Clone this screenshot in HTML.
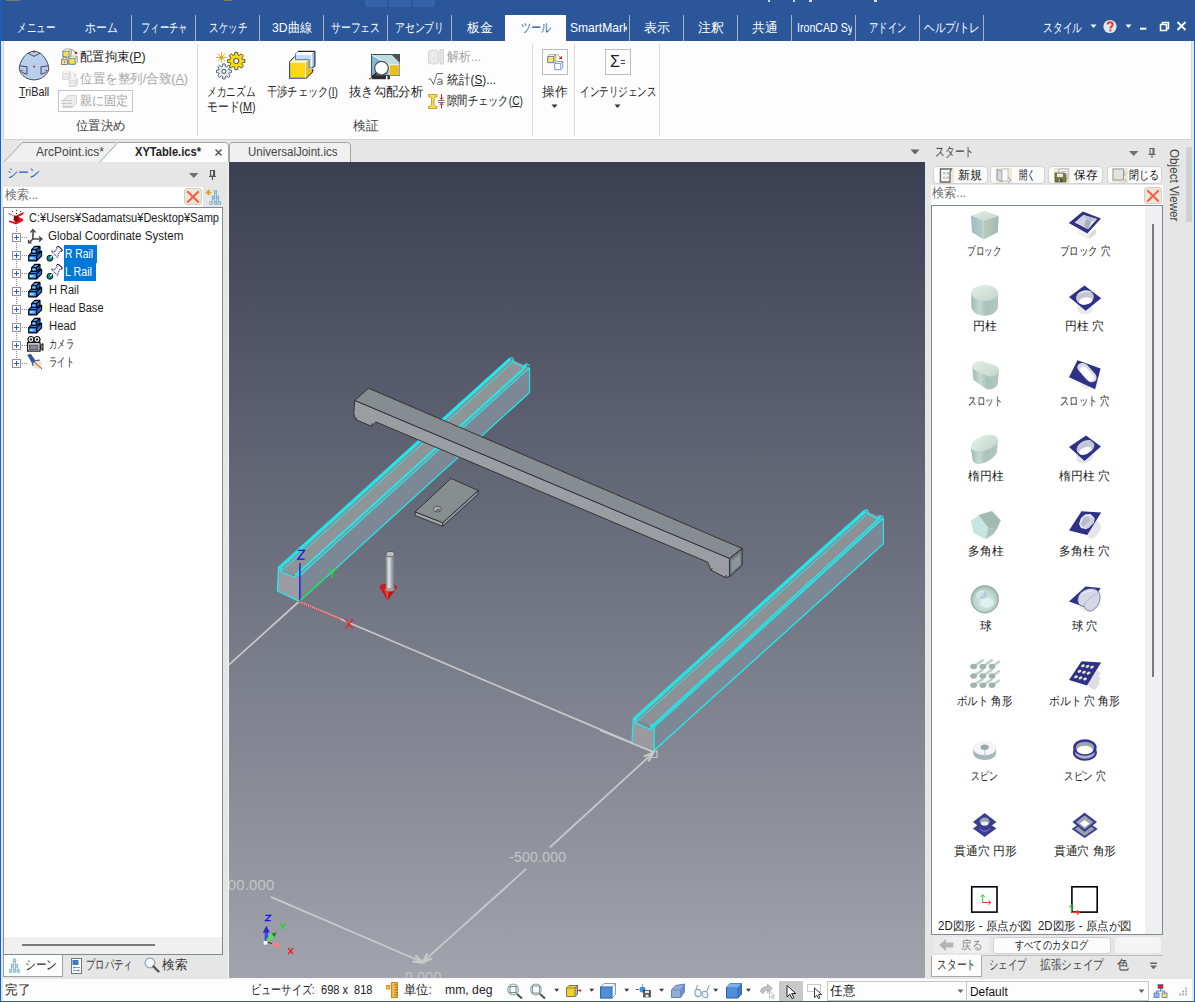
<!DOCTYPE html>
<html lang="ja">
<head>
<meta charset="utf-8">
<title>IronCAD</title>
<style>
*{box-sizing:border-box;margin:0;padding:0}
html,body{width:1195px;height:1002px;overflow:hidden}
body{position:relative;background:#e6e6e6;font-family:"Liberation Sans",sans-serif;font-size:12px;color:#1e1e1e}
.abs{position:absolute}
.t{position:absolute;white-space:nowrap;line-height:16px;height:16px;font-size:12px;transform-origin:0 0}
.clip{position:absolute;overflow:hidden}
.c{text-align:center}
svg{position:absolute;overflow:visible}
/* top bar */
#top{left:0;top:0;width:1195px;height:41px;background:#2b579a}
.m{top:19px;height:17px;color:#fff;font-size:13px;line-height:17px}
.msep{position:absolute;top:15px;width:1px;height:26px;background:#a3b0c6}
#ribbon{left:3px;top:41px;width:1189px;border-left:1px solid #d6d6d6;height:98.600px;background:#fdfdfd;border-bottom:1px solid #d2d2d2;border-right:1px solid #d6d6d6}
.rsep{position:absolute;top:44px;width:1px;height:92px;background:#d8d8d8}
.r{font-size:13px;color:#262626}
.dis{color:#a6a6a6}
.g{top:118px;font-size:13px;color:#444}
u{text-decoration:underline;text-underline-offset:1px}
/* edges */
#edgeL{left:0;top:0;width:1px;height:1002px;background:#0f63d2}
#edgeR{left:1194px;top:41px;width:1px;height:961px;background:#0f63d2}
#edgeB{left:0;top:1001px;width:1195px;height:1px;background:#0f63d2}
/* viewport */
#view{left:229px;top:162px;width:696px;height:816px;background:linear-gradient(#3b3f52,#a1a4ad);overflow:hidden}
/* status */
#status{left:3px;top:979px;width:1189px;height:22px;background:#fdfdfd}
/* left panel */
#lp-search{left:3px;top:187px;width:200px;height:20px;background:#fff}
#tree{left:3px;top:207px;width:220px;height:748px;background:#fff;border:1px solid #828790;overflow:hidden}
.trow{position:absolute;left:0;height:18px;line-height:18px;font-size:12px;white-space:nowrap;color:#1e1e1e}
.sel{position:absolute;background:#0078d7;color:#fff;height:18px;line-height:18px;font-size:12px;white-space:nowrap}
.pm{position:absolute;width:9px;height:9px;border:1px solid #919191;background:#fff}
.pm:before{content:"";position:absolute;left:1px;top:3px;width:5px;height:1px;background:#2b5fc0}
.pm:after{content:"";position:absolute;left:3px;top:1px;width:1px;height:5px;background:#2b5fc0}
/* right panel */
.cbtn{position:absolute;top:166.300px;height:17.400px;background:#fbfbfb;border:1px solid #d2d2d2;border-radius:4px;font-size:12px;line-height:15px;white-space:nowrap}
#cat{left:931px;top:205px;width:232px;height:730px;background:#fff;border:1px solid #828790;overflow:hidden}
.cl{position:absolute;width:116px;text-align:center;font-size:12px;line-height:16px;height:16px;white-space:nowrap;color:#1e1e1e}
</style>
</head>
<body>
<div id="top" class="abs"></div>
<!-- faint title-bar remnants -->
<div class="abs" style="left:365px;top:0;width:22px;height:7px;background:#3563aa"></div>
<div class="abs" style="left:389px;top:0;width:22px;height:7px;background:#3563aa"></div>
<div class="abs" style="left:413px;top:0;width:22px;height:7px;background:#3563aa"></div>
<div class="abs" style="left:6px;top:0;width:14px;height:1px;background:#7a7a6a"></div>
<div class="abs" style="left:224px;top:0;width:8px;height:1px;background:#8a7a4a"></div>
<div class="abs" style="left:768px;top:0;width:2px;height:1.500px;background:#c9d4e8"></div>
<div class="abs" style="left:792.500px;top:0;width:2px;height:1.500px;background:#c9d4e8"></div>
<div class="abs" style="left:808.500px;top:0;width:3px;height:1.500px;background:#d9e1f0"></div>
<div class="abs" style="left:874px;top:0;width:3px;height:1.500px;background:#d9e1f0"></div>
<!-- active tab -->
<div class="abs" style="left:505px;top:15px;width:61px;height:27px;background:#fdfdfd"></div>
<div class="msep" style="left:131px"></div>
<div class="msep" style="left:195px"></div>
<div class="msep" style="left:259px"></div>
<div class="msep" style="left:323px"></div>
<div class="msep" style="left:387px"></div>
<div class="msep" style="left:451px"></div>
<div class="msep" style="left:629px"></div>
<div class="msep" style="left:683px"></div>
<div class="msep" style="left:737px"></div>
<div class="msep" style="left:791px"></div>
<div class="msep" style="left:855px"></div>
<div class="msep" style="left:919px"></div>
<div class="msep" style="left:983px"></div>
<div class="t m" style="left:17px;transform:scaleX(0.731)">メニュー</div>
<div class="t m" style="left:85px;transform:scaleX(0.833)">ホーム</div>
<div class="t m" style="left:140.6px;transform:scaleX(0.714)">フィーチャ</div>
<div class="t m" style="left:209px;transform:scaleX(0.731)">スケッチ</div>
<div class="t m" style="left:272.3px;transform:scaleX(0.938)">3D曲線</div>
<div class="t m" style="left:331px;transform:scaleX(0.754)">サーフェス</div>
<div class="t m" style="left:395px;transform:scaleX(0.754)">アセンブリ</div>
<div class="t m" style="left:466.5px;transform:scaleX(0.981)">板金</div>
<div class="t m" style="left:644px;transform:scaleX(1.000)">表示</div>
<div class="t m" style="left:698px;transform:scaleX(1.000)">注釈</div>
<div class="t m" style="left:752.4px;transform:scaleX(0.985)">共通</div>
<div class="t m" style="left:868.6px;transform:scaleX(0.719)">アドイン</div>
<div class="t m" style="left:1043px;transform:scaleX(0.750)">スタイル</div>
<div class="t m" style="left:520.5px;transform:scaleX(0.782);color:#2b579a">ツール</div>
<div class="clip" style="left:570px;top:15px;width:57px;height:26px"><div class="t m" style="left:0;top:4px;transform:scaleX(0.928)">SmartMark</div></div>
<div class="clip" style="left:796px;top:15px;width:56px;height:26px"><div class="t m" style="left:0.6px;top:4px;transform:scaleX(0.818)">IronCAD Sys</div></div>
<div class="clip" style="left:923px;top:15px;width:58px;height:26px"><div class="t m" style="left:1px;top:4px;transform:scaleX(0.816)">ヘルプ/トレ</div></div>
<svg style="left:1088px;top:14px" width="107" height="26" viewBox="0 0 107 26">
  <path d="M2.5 10.5h6l-3 3.5z" fill="#fff"/>
  <circle cx="22" cy="12.5" r="6.6" fill="#e4e8f2"/>
  <path d="M19.6 10.6c0-3.2 5-3.2 5 0c0 2-2.2 2-2.2 3.8" fill="none" stroke="#e8392c" stroke-width="2"/>
  <rect x="21.4" y="15.4" width="2" height="2" fill="#e8392c"/>
  <path d="M37.5 10.5h6l-3 3.5z" fill="#fff"/>
  <rect x="52" y="13.700" width="6.300" height="2" fill="#fff"/>
  <path d="M72.5 10.5h6v6h-6z M74.5 10.5v-2h6v6h-2" fill="none" stroke="#fff" stroke-width="1.5"/>
  <path d="M89.5 8l8 8M97.5 8l-8 8" stroke="#fff" stroke-width="1.8" fill="none"/>
</svg>
<div id="ribbon" class="abs"></div>
<div class="rsep" style="left:197px"></div>
<div class="rsep" style="left:532px"></div>
<div class="rsep" style="left:574px"></div>
<div class="rsep" style="left:659px"></div>
<!-- TriBall -->
<svg style="left:18px;top:49px" width="34" height="34" viewBox="0 0 34 34">
  <path d="M16 2.400C23.500 2.400 28.800 10 30.600 17.500C31.800 24 24.500 30.900 16 30.900C7.500 30.900.200 24 1.400 17.500C3.200 10 8.500 2.400 16 2.400Z" fill="#b9cfec" stroke="#3f4a5c" stroke-width="1"/>
  <path d="M10 4.2l6 3.2 6-3.2" fill="none" stroke="#3f4a5c" stroke-width="1"/>
  <path d="M1.600 16.800l7.400 1v7.500l-4.800-1.800" fill="#b3c9e8" stroke="#3f4a5c" stroke-width="1"/>
  <path d="M30.400 16.800l-7.400 1v7.500l4.800-1.800" fill="#b3c9e8" stroke="#3f4a5c" stroke-width="1"/>
  <circle cx="16" cy="2.400" r="1" fill="#b01020"/><circle cx="16.200" cy="17.600" r="0.900" fill="#b01020"/>
  <ellipse cx="3.600" cy="21.800" rx="1.100" ry="0.800" fill="#b01020"/><ellipse cx="28.400" cy="21.800" rx="1.100" ry="0.800" fill="#b01020"/>
</svg>
<div class="t r" style="left:19.2px;top:84px;font-size:12.5px;transform:scaleX(0.864)"><u>T</u>riBall</div>
<!-- 配置拘束 -->
<svg style="left:61px;top:49px" width="17" height="17" viewBox="0 0 17 17">
  <path d="M1.9 2.4l2-2.200h6.200v5.800l-2 2.200h-6.200z" fill="#fbe04a" stroke="#4a7ac8" stroke-width="1" stroke-linejoin="round"/><path d="M1.9 2.4l2-2.200h6.200l-2 2.200z" fill="#fbf2a4"/><path d="M8.1 2.4l2-2.200v5.800l-2 2.200z" fill="#e8d88a"/><path d="M1.9 2.4h6.200v5.800M8.1 2.4l2-2.200" fill="none" stroke="#4a7ac8" stroke-width="0.700"/>
  <path d="M7.8 9.5l2-2.200h6.200v5.800l-2 2.200h-6.200z" fill="#fbe04a" stroke="#4a7ac8" stroke-width="1" stroke-linejoin="round"/><path d="M7.8 9.5l2-2.200h6.200l-2 2.200z" fill="#fbf2a4"/><path d="M14 9.5l2-2.200v5.800l-2 2.200z" fill="#e8d88a"/><path d="M7.8 9.5h6.200v5.800M14 9.5l2-2.200" fill="none" stroke="#4a7ac8" stroke-width="0.700"/>
  <path d="M1.800 10.800v-1.300a1.700 1.700 0 013.400 0v1.300" fill="none" stroke="#8f8f8f" stroke-width="1.100"/>
  <rect x="0.500" y="10.700" width="6" height="4.800" fill="#f0dfb0" stroke="#8a7a50" stroke-width="0.900"/><rect x="3" y="12.300" width="1" height="1.800" fill="#8a7a50"/>
  <path d="M11.200 0.500l3.400 3.200" stroke="#e8384a" stroke-width="0.900" fill="none"/><circle cx="15" cy="4" r="1.200" fill="#e00018"/>
</svg>
<div class="t r" style="left:80.2px;top:48.5px;transform:scaleX(0.946)">配置拘束(<u>P</u>)</div>
<!-- 位置を整列 -->
<svg style="left:61px;top:71px" width="17" height="17" viewBox="0 0 17 17">
  <path d="M1.5 2.5l2-2.200h6.200v5.800l-2 2.200h-6.200z" fill="#ececec" stroke="#d4d4d4" stroke-width="1" stroke-linejoin="round"/><path d="M1.5 2.5l2-2.200h6.200l-2 2.200z" fill="#f4f4f4"/><path d="M7.7 2.5l2-2.200v5.800l-2 2.200z" fill="#e2e2e2"/><path d="M1.5 2.5h6.200v5.800M7.7 2.5l2-2.200" fill="none" stroke="#d4d4d4" stroke-width="0.700"/>
  <path d="M8.3 9.5l2-2.200h6.200v5.800l-2 2.200h-6.200z" fill="#ececec" stroke="#d4d4d4" stroke-width="1" stroke-linejoin="round"/><path d="M8.3 9.5l2-2.200h6.200l-2 2.200z" fill="#f4f4f4"/><path d="M14.5 9.5l2-2.200v5.800l-2 2.200z" fill="#e2e2e2"/><path d="M8.3 9.5h6.200v5.800M14.5 9.5l2-2.200" fill="none" stroke="#d4d4d4" stroke-width="0.700"/>
  <path d="M11.200 1.500l3.400 3.200M14.800 2.300v2.600h-2.600" stroke="#cfcfcf" stroke-width="0.900" fill="none"/>
</svg>
<div class="t r dis" style="left:80.2px;top:70.5px;transform:scaleX(0.965)">位置を整列/合致(<u>A</u>)</div>
<!-- 親に固定 -->
<div class="abs" style="left:58px;top:90px;width:75px;height:22px;border:1px solid #c4c4c4"></div>
<svg style="left:61px;top:94px" width="17" height="15" viewBox="0 0 17 15">
  <path d="M2.5 5.5l4-4h9v7l-4 5h-9z" fill="#ececec" stroke="#d4d4d4"/>
  <path d="M0 6.500h11M0 9.500h11M1 12.500h10" stroke="#c9c9c9" fill="none"/>
</svg>
<div class="t r dis" style="left:79.6px;top:92.5px;transform:scaleX(0.935)">親に固定</div>
<div class="t g" style="left:76.4px;transform:scaleX(0.952)">位置決め</div>
<!-- メカニズム -->
<svg style="left:214px;top:50px" width="34" height="30" viewBox="0 0 34 30">
  <g stroke="#d9a520" stroke-width="0.900" fill="none"><path d="M7.400 1.900v11M1.900 7.400h11M3.500 3.500l7.800 7.800M11.300 3.500l-7.800 7.800"/></g><circle cx="7.400" cy="7.400" r="1.900" fill="#d9a520"/>
  <path d="M20.47 5.05L20.87 2.29L23.67 2.29L24.07 5.05L25.19 5.51L27.42 3.85L29.40 5.83L27.74 8.06L28.20 9.18L30.96 9.58L30.96 12.38L28.20 12.78L27.74 13.90L29.40 16.13L27.42 18.11L25.19 16.45L24.07 16.91L23.67 19.67L20.87 19.67L20.47 16.91L19.35 16.45L17.12 18.11L15.14 16.13L16.80 13.90L16.34 12.78L13.58 12.38L13.58 9.58L16.34 9.18L16.80 8.06L15.14 5.83L17.12 3.85L19.35 5.51Z" fill="#fadb14" stroke="#4a4a3a" stroke-width="0.900" stroke-linejoin="round"/>
  <circle cx="22.270" cy="10.980" r="2.600" fill="#fff" stroke="#3c4458" stroke-width="1"/>
  <path d="M8.35 16.45L8.75 13.90L11.15 13.90L11.55 16.45L12.32 16.77L14.41 15.24L16.11 16.94L14.58 19.03L14.90 19.80L17.45 20.20L17.45 22.60L14.90 23.00L14.58 23.77L16.11 25.86L14.41 27.56L12.32 26.03L11.55 26.35L11.15 28.90L8.75 28.90L8.35 26.35L7.58 26.03L5.49 27.56L3.79 25.86L5.32 23.77L5.00 23.00L2.45 22.60L2.45 20.20L5.00 19.80L5.32 19.03L3.79 16.94L5.49 15.24L7.58 16.77Z" fill="#e6e9f6" stroke="#4d5563" stroke-width="0.900" stroke-linejoin="round"/>
  <circle cx="9.950" cy="21.400" r="2" fill="#fff" stroke="#3c4458" stroke-width="1"/>
</svg>
<div class="t r" style="left:207px;top:83.5px;transform:scaleX(0.746)">メカニズム</div>
<div class="t r" style="left:207px;top:98.500px;transform:scaleX(0.829)">モード(<u>M</u>)</div>
<!-- 干渉チェック -->
<svg style="left:288px;top:50px" width="28" height="30" viewBox="0 0 28 30">
  <path d="M17.900 12.200l3.300-2.500v9l3.600.3v2.900l-6.900 6.500z" fill="#e8c020"/>
  <path d="M1.400 12.200l5.400-5.600 14.400 3.100-3.300 2.500z" fill="#fff6b4"/>
  <rect x="1.400" y="12.200" width="16.500" height="16.100" fill="#fdd718"/>
  <path d="M17.500 12.400v15.800" stroke="#fff" stroke-width="0.900"/>
  <path d="M1.400 12.200h16.500" stroke="#fff" stroke-width="0.800"/>
  <path d="M1.600 12.200v16.100h16.300" fill="none" stroke="#1a4f9c" stroke-width="1.100"/>
  <path d="M1.400 12L6.800 6.400M17.900 28.500l6.900-6.600v-3" fill="none" stroke="#111" stroke-width="1"/>
  <path d="M7.500 3.900l2.500-2.500h16.900l-2.500 2.500z" fill="#fff"/>
  <path d="M7.500 3.900h16.900v14h-3.200v-8.200h-13.700z" fill="#c5d9f5"/>
  <path d="M8 4.600h15.600v13" fill="none" stroke="#fff" stroke-width="1"/>
  <path d="M24.400 3.900l2.500-2.500v14.400l-2.500 2.100z" fill="#9dbcf0"/>
  <path d="M7.500 3.900v5.800h13.700v8.200h3.200" fill="none" stroke="#4a78c0" stroke-width="1"/>
  <path d="M7.500 3.900l2.500-2.500" fill="none" stroke="#4a78c0" stroke-width="0.900"/>
  <path d="M10 1.400h16.900v14.400l-2.500 2.100" fill="none" stroke="#1e2a40" stroke-width="1.100"/>
  <path d="M24.400 3.900l2.500-2.500" stroke="#5a6a88" stroke-width="0.700"/>
</svg>
<div class="t r" style="left:266.6px;top:83.500px;transform:scaleX(0.786)">干渉チェック(<u>I</u>)</div>
<!-- 抜き勾配分析 -->
<svg style="left:369px;top:53px" width="32" height="28" viewBox="0 0 32 28">
  <rect x="2.500" y="1.500" width="28" height="21" fill="#7fb7d6" stroke="#4a4a4a" stroke-width="1"/>
  <path d="M3 2h20l7.500 7.500v2h-11z" fill="#bfdde0"/>
  <path d="M3 2l16.500 9.500" stroke="#fff" stroke-width="1"/>
  <path d="M23 2h7.500v7.500z" fill="#505050"/>
  <rect x="19.700" y="11.300" width="10.800" height="11" fill="#fff"/><rect x="20.500" y="12.200" width="9.500" height="10" fill="#e8bf22"/>
  <circle cx="12.500" cy="15.200" r="6.800" fill="#fff" stroke="#4a4a4a" stroke-width="1.200"/>
  <path d="M7.500 20.500l-5 4.500" stroke="#333" stroke-width="2.400"/>
  <rect x="3" y="23" width="14" height="3.200" fill="#2c2c2c"/><rect x="18.500" y="22.500" width="2.400" height="3.800" fill="#2c2c2c"/>
  <rect x="0" y="25" width="2" height="1.300" fill="#e04010"/>
</svg>
<div class="t r" style="left:348.500px;top:83.500px;transform:scaleX(0.951)">抜き勾配分析</div>
<!-- 解析 -->
<svg style="left:428px;top:49px" width="17" height="16" viewBox="0 0 17 16">
  <path d="M0.500 3.500a5 2.500 0 0110 0v9a5 2.500 0 01-10 0z" fill="#e9e9e9" stroke="#d2d2d2"/>
  <rect x="12" y="0.500" width="3.500" height="14.500" fill="#e4e4e4" stroke="#d6d6d6"/>
</svg>
<div class="t r dis" style="left:447.200px;top:49px;transform:scaleX(0.923)">解析...</div>
<!-- 統計 -->
<svg style="left:428px;top:72px" width="17" height="14" viewBox="0 0 17 14">
  <path d="M0.500 7.500l2-1 3 6 3.500-11h6" fill="none" stroke="#6c6c6c" stroke-width="1"/>
  <path d="M9.500 7.800c1.500-1.300 4.500-1.200 4.500 1v3.700m0-2.700c-2.500 0-4.800.3-4.800 1.700 0 1.600 3.600 1.500 4.800-.3" fill="none" stroke="#555" stroke-width="1"/>
</svg>
<div class="t r" style="left:447.200px;top:71.500px;transform:scaleX(0.904)">統計(<u>S</u>)...</div>
<!-- 隙間チェック -->
<svg style="left:428px;top:94px" width="17" height="15" viewBox="0 0 17 15">
  <path d="M0.500 0.500h8.500v2.200h-1.800l-1.200 1.500v6.600l1.200 1.500h1.800v2.200h-8.500v-2.200h1.800l1.200-1.500v-6.600l-1.200-1.500h-1.800z" fill="#f9e04a" stroke="#b8981e" stroke-width="0.900"/>
  <path d="M13.500 0v5.500M13.500 14.500v-5.500M11.800 3.500l1.700 2 1.700-2M11.800 11l1.700-2 1.700 2" stroke="#e8202a" fill="none" stroke-width="1"/>
  <path d="M10 6.500h6.500M10 8.500h6.500" stroke="#777" stroke-width="1"/>
</svg>
<div class="t r" style="left:447.200px;top:93px;transform:scaleX(0.791)">隙間チェック(<u>C</u>)</div>
<div class="t g" style="left:352.500px;transform:scaleX(0.977)">検証</div>
<!-- 操作 -->
<div class="abs" style="left:542px;top:49px;width:26px;height:26px;border:1px solid #bcbcbc;background:#fdfdfd"></div>
<svg style="left:546px;top:53px" width="18" height="18" viewBox="0 0 18 18">
  <path d="M1.700 3.500l2-2h6v6.200l-2 2h-6z" fill="#f7e468" stroke="#5f7fb8" stroke-width="1" stroke-linejoin="round"/>
  <path d="M3.700 1.500l-2 2h6l2-2z" fill="#fdf3a8"/><path d="M7.700 3.500l2-2v6.200l-2 2z" fill="#f1dc50"/>
  <path d="M1.700 3.500h6v6.200M7.700 3.500l2-2" fill="none" stroke="#5f7fb8" stroke-width="0.900"/>
  <path d="M8.700 10.500l2-2h6v6.200l-2 2h-6z" fill="#fbfcff" stroke="#7f93d0" stroke-width="1" stroke-linejoin="round"/>
  <path d="M8.700 10.500h6v6.200M14.700 10.500l2-2" fill="none" stroke="#7f93d0" stroke-width="0.900"/>
  <path d="M11 1.200l3.500 3.400" fill="none" stroke="#e02828" stroke-width="1" stroke-dasharray="1 0.600"/>
  <path d="M15.900 5.900h-3.300l3.300-3.200z" fill="#e00010"/>
</svg>
<div class="t r" style="left:542.400px;top:83.500px;transform:scaleX(0.973)">操作</div>
<svg style="left:551px;top:104px" width="8" height="5" viewBox="0 0 8 5"><path d="M0.500 0.500h6l-3 3.500z" fill="#333"/></svg>
<!-- インテリジェンス -->
<div class="abs" style="left:605px;top:49px;width:26px;height:26px;border:1px solid #bcbcbc;background:#fdfdfd"></div>
<div class="t" style="left:610px;top:53px;font-size:17px;line-height:18px;height:18px;color:#222;transform:scaleX(0.951)">Σ</div>
<div class="abs" style="left:621px;top:60px;width:4px;height:1px;background:#444"></div>
<div class="abs" style="left:621px;top:63px;width:4px;height:1px;background:#444"></div>
<div class="t r" style="left:580px;top:83.500px;transform:scaleX(0.731)">インテリジェンス</div>
<svg style="left:614px;top:104px" width="8" height="5" viewBox="0 0 8 5"><path d="M0.500 0.500h6l-3 3.500z" fill="#333"/></svg>
<svg style="left:0;top:139px" width="930" height="24" viewBox="0 0 930 24">
  <path d="M3.500 23L22.500 3.500h96L100 23z" fill="#f0f0f0"/>
  <path d="M3.500 23.300L22.500 3.500h94" fill="none" stroke="#a3a3a3" stroke-width="1"/>
  <path d="M99.500 23L118 3.500h107q3.500 0 3.500 3.500v16z" fill="#fdfdfd"/>
  <path d="M99.500 23.300L118 3.500h107q3.500 0 3.500 3.500v16" fill="none" stroke="#a3a3a3" stroke-width="1"/>
  <path d="M229.500 23v-16.500q0-3 3-3h115q3 0 3 3v16.500z" fill="#f0f0f0"/>
  <path d="M229.500 23v-16.500q0-3 3-3h115q3 0 3 3v16.500" fill="none" stroke="#a3a3a3" stroke-width="1"/>
  <path d="M215.500 10.500l6 6M221.500 10.500l-6 6" stroke="#555" stroke-width="1.500" fill="none"/>
  <path d="M910.500 10.500h9l-4.500 5z" fill="#666"/>
</svg>
<div class="t" style="left:36px;top:143.500px;font-size:12.5px;color:#444;transform:scaleX(0.960)">ArcPoint.ics*</div>
<div class="t" style="left:135px;top:143.500px;font-size:12.5px;font-weight:bold;color:#222;transform:scaleX(0.891)">XYTable.ics*</div>
<div class="t" style="left:247.500px;top:143.500px;font-size:12.5px;color:#444;transform:scaleX(0.920)">UniversalJoint.ics</div>
<!-- left panel -->
<div class="t" style="left:7px;top:165px;font-size:13px;color:#1e63c8;transform:scaleX(0.833)">シーン</div>
<svg style="left:188px;top:169px" width="30" height="12" viewBox="0 0 30 12">
  <path d="M1 4h9.500l-4.750 5z" fill="#6f6f6f"/>
  <path d="M22.500 1.500h4v5.500h-4zM21 7.500h7M24.500 7.500v3.500" fill="none" stroke="#555" stroke-width="1.200"/>
  <rect x="25" y="2" width="1.500" height="5" fill="#555"/>
</svg>
<div id="lp-search" class="abs"></div>
<div class="t" style="left:5px;top:187px;font-size:12.5px;color:#6d6d6d;transform:scaleX(0.906)">検索...</div>
<div class="abs" style="left:184px;top:188px;width:18px;height:17px;background:#ece9d8;border:1px solid #cfcfca;border-radius:3px"></div>
<svg style="left:184px;top:188px" width="18" height="17" viewBox="0 0 18 17"><path d="M3.200 3.300l11.600 11.200M14.800 3.300L3.200 14.500" stroke="#fb5a44" stroke-width="2" fill="none"/></svg>
<svg style="left:205px;top:189px" width="16" height="16" viewBox="0 0 16 16">
  <g stroke="#d9a520" stroke-width="1"><path d="M3.500 0.500v6M0.500 3.500h6M1.400 1.400l4.200 4.200M5.600 1.400L1.400 5.600"/></g>
  <g fill="none" stroke="#7aa7d8" stroke-width="0.900"><path d="M10.500 3l-2 5.500-2.500 5.500M10.500 3l2 5.500 2 5.500M8.500 8.500l2 5.500M12.500 8.500l-2 5.500"/></g>
  <g fill="#d9ecb0" stroke="#6da0d8" stroke-width="0.800"><rect x="9.300" y="1.800" width="2.400" height="2.400"/><rect x="7.300" y="7.300" width="2.400" height="2.400"/><rect x="11.300" y="7.300" width="2.400" height="2.400"/><rect x="4.800" y="12.800" width="2.400" height="2.400"/><rect x="9.300" y="12.800" width="2.400" height="2.400"/><rect x="13" y="12.800" width="2.400" height="2.400"/></g>
</svg>
<div id="tree" class="abs"></div>
<div class="abs" style="left:16px;top:226px;width:1px;height:138px;background:repeating-linear-gradient(#fff 0 1px,#8a8a8a 1px 2px)"></div>
<div class="pm" style="left:12px;top:233px"></div><div class="abs" style="left:22px;top:237px;width:6px;height:1px;background:repeating-linear-gradient(90deg,#8a8a8a 0 1px,#fff 1px 2px)"></div>
<div class="pm" style="left:12px;top:251px"></div><div class="abs" style="left:22px;top:255px;width:6px;height:1px;background:repeating-linear-gradient(90deg,#8a8a8a 0 1px,#fff 1px 2px)"></div>
<div class="pm" style="left:12px;top:269px"></div><div class="abs" style="left:22px;top:273px;width:6px;height:1px;background:repeating-linear-gradient(90deg,#8a8a8a 0 1px,#fff 1px 2px)"></div>
<div class="pm" style="left:12px;top:287px"></div><div class="abs" style="left:22px;top:291px;width:6px;height:1px;background:repeating-linear-gradient(90deg,#8a8a8a 0 1px,#fff 1px 2px)"></div>
<div class="pm" style="left:12px;top:305px"></div><div class="abs" style="left:22px;top:309px;width:6px;height:1px;background:repeating-linear-gradient(90deg,#8a8a8a 0 1px,#fff 1px 2px)"></div>
<div class="pm" style="left:12px;top:323px"></div><div class="abs" style="left:22px;top:327px;width:6px;height:1px;background:repeating-linear-gradient(90deg,#8a8a8a 0 1px,#fff 1px 2px)"></div>
<div class="pm" style="left:12px;top:341px"></div><div class="abs" style="left:22px;top:345px;width:6px;height:1px;background:repeating-linear-gradient(90deg,#8a8a8a 0 1px,#fff 1px 2px)"></div>
<div class="pm" style="left:12px;top:359px"></div><div class="abs" style="left:22px;top:363px;width:6px;height:1px;background:repeating-linear-gradient(90deg,#8a8a8a 0 1px,#fff 1px 2px)"></div>
<svg style="left:8px;top:210px" width="17" height="16" viewBox="0 0 17 16">
  <path d="M0.500 3l5 2.500 3 0 7-3.500v2l-5 3 4.500 2v2l-7 3.500-7-2.500v-1.500l6.500 1.500 2-1-2-2-2-3-5-2z" fill="#e8101c"/>
  <path d="M6 6l4 0 1 4-3 2.500-2.500-2.500z" fill="#8a0a10"/>
  <g fill="#222"><rect x="4" y="1" width="1" height="1"/><rect x="8" y="0" width="1" height="1"/><rect x="12" y="1" width="1" height="1"/><rect x="8" y="3" width="1" height="1"/></g>
</svg>
<div class="clip" style="left:29px;top:209px;width:191px;height:18px"><div class="t" style="left:0.400px;top:1px;transform:scaleX(0.922)">C:¥Users¥Sadamatsu¥Desktop¥Samp</div></div>
<svg style="left:28px;top:229px" width="15" height="15" viewBox="0 0 15 15">
  <path d="M5 10V1.500M5 10h8.500M5 10l-4 3.500" stroke="#444" stroke-width="1.600" fill="none"/>
  <path d="M2.500 3.500l2.500-3 2.500 3M11 7.500l3 2.500-3 2.500M.5 10.800v3h3.200" stroke="#444" stroke-width="1.300" fill="none"/>
</svg>
<div class="t" style="left:48px;top:227.800px;transform:scaleX(0.967)">Global Coordinate System</div>
<svg style="left:28px;top:246px" width="15" height="16" viewBox="0 0 15 16">
  <g stroke="#000" stroke-width="1.100" stroke-linejoin="bevel">
  <path d="M0.700 9.700l4.300-4.500h8.600l-5 4.500z" fill="#1e86f0"/>
  <path d="M8.600 9.700l5-4.500v4.600l-5 5.100z" fill="#176fd8"/>
  <path d="M0.700 9.700h7.900v5.200h-7.900z" fill="#2a8cf4"/>
  <path d="M3.600 3.700l3.200-3.300h5.200l-3.400 3.300z" fill="#3f9cf8"/>
  <path d="M8.600 3.700l3.400-3.300v4.700l-3.400 2.300z" fill="#176fd8"/>
  <path d="M3.600 3.700h5v3.700h-5z" fill="#2a8cf4"/>
  </g>
  <path d="M4.500 4.600h2.500v1.600h-2.500z" fill="#8cc8ff"/><path d="M1.800 10.900h4.800v2.200h-4.800z" fill="#6fb8ff"/><path d="M2 11h3l-1 1.800h-2z" fill="#a8d8ff"/>
</svg>
<svg style="left:28px;top:264px" width="15" height="16" viewBox="0 0 15 16">
  <g stroke="#000" stroke-width="1.100" stroke-linejoin="bevel">
  <path d="M0.700 9.700l4.300-4.500h8.600l-5 4.500z" fill="#1e86f0"/>
  <path d="M8.600 9.700l5-4.500v4.600l-5 5.100z" fill="#176fd8"/>
  <path d="M0.700 9.700h7.900v5.200h-7.900z" fill="#2a8cf4"/>
  <path d="M3.600 3.700l3.200-3.300h5.200l-3.400 3.300z" fill="#3f9cf8"/>
  <path d="M8.600 3.700l3.400-3.300v4.700l-3.400 2.300z" fill="#176fd8"/>
  <path d="M3.600 3.700h5v3.700h-5z" fill="#2a8cf4"/>
  </g>
  <path d="M4.500 4.600h2.500v1.600h-2.500z" fill="#8cc8ff"/><path d="M1.800 10.900h4.800v2.200h-4.800z" fill="#6fb8ff"/><path d="M2 11h3l-1 1.800h-2z" fill="#a8d8ff"/>
</svg>
<svg style="left:28px;top:282px" width="15" height="16" viewBox="0 0 15 16">
  <g stroke="#000" stroke-width="1.100" stroke-linejoin="bevel">
  <path d="M0.700 9.700l4.300-4.500h8.600l-5 4.500z" fill="#1e86f0"/>
  <path d="M8.600 9.700l5-4.500v4.600l-5 5.100z" fill="#176fd8"/>
  <path d="M0.700 9.700h7.900v5.200h-7.900z" fill="#2a8cf4"/>
  <path d="M3.600 3.700l3.200-3.300h5.200l-3.400 3.300z" fill="#3f9cf8"/>
  <path d="M8.600 3.700l3.400-3.300v4.700l-3.400 2.300z" fill="#176fd8"/>
  <path d="M3.600 3.700h5v3.700h-5z" fill="#2a8cf4"/>
  </g>
  <path d="M4.500 4.600h2.500v1.600h-2.500z" fill="#8cc8ff"/><path d="M1.800 10.900h4.800v2.200h-4.800z" fill="#6fb8ff"/><path d="M2 11h3l-1 1.800h-2z" fill="#a8d8ff"/>
</svg>
<svg style="left:28px;top:300px" width="15" height="16" viewBox="0 0 15 16">
  <g stroke="#000" stroke-width="1.100" stroke-linejoin="bevel">
  <path d="M0.700 9.700l4.300-4.500h8.600l-5 4.500z" fill="#1e86f0"/>
  <path d="M8.600 9.700l5-4.500v4.600l-5 5.100z" fill="#176fd8"/>
  <path d="M0.700 9.700h7.900v5.200h-7.900z" fill="#2a8cf4"/>
  <path d="M3.600 3.700l3.200-3.300h5.200l-3.400 3.300z" fill="#3f9cf8"/>
  <path d="M8.600 3.700l3.400-3.300v4.700l-3.400 2.300z" fill="#176fd8"/>
  <path d="M3.600 3.700h5v3.700h-5z" fill="#2a8cf4"/>
  </g>
  <path d="M4.500 4.600h2.500v1.600h-2.500z" fill="#8cc8ff"/><path d="M1.800 10.900h4.800v2.200h-4.800z" fill="#6fb8ff"/><path d="M2 11h3l-1 1.800h-2z" fill="#a8d8ff"/>
</svg>
<svg style="left:28px;top:318px" width="15" height="16" viewBox="0 0 15 16">
  <g stroke="#000" stroke-width="1.100" stroke-linejoin="bevel">
  <path d="M0.700 9.700l4.300-4.500h8.600l-5 4.500z" fill="#1e86f0"/>
  <path d="M8.600 9.700l5-4.500v4.600l-5 5.100z" fill="#176fd8"/>
  <path d="M0.700 9.700h7.900v5.200h-7.900z" fill="#2a8cf4"/>
  <path d="M3.600 3.700l3.200-3.300h5.200l-3.400 3.300z" fill="#3f9cf8"/>
  <path d="M8.600 3.700l3.400-3.300v4.700l-3.400 2.300z" fill="#176fd8"/>
  <path d="M3.600 3.700h5v3.700h-5z" fill="#2a8cf4"/>
  </g>
  <path d="M4.500 4.600h2.500v1.600h-2.500z" fill="#8cc8ff"/><path d="M1.800 10.900h4.800v2.200h-4.800z" fill="#6fb8ff"/><path d="M2 11h3l-1 1.800h-2z" fill="#a8d8ff"/>
</svg>
<svg style="left:45.500px;top:246px" width="17" height="17" viewBox="0 0 17 17">
  <path d="M4.200 12l4-3.600" stroke="#d8d8d8" stroke-width="1.400"/>
  <circle cx="3.860" cy="12.300" r="2.900" fill="#0a9494" stroke="#111" stroke-width="1"/>
  <path d="M4.300 11.900l1.800-1.600" stroke="#f4f4f4" stroke-width="1.200"/>
  <path d="M5.300 5.100l3.900.2 1.900-3-.6-1q1-1.400 2.400-.6l3.100 2.700q.6 1.200-.6 1.900l-1.100-.4-1.800 2.900-.9 3.800z" fill="#f2f2f2" stroke="#1a1a9a" stroke-width="0.900" stroke-linejoin="round" stroke-dasharray="1.600 0.700"/>
  <path d="M10.500 1.300q1-1.400 2.400-.6l3.100 2.700q.6 1.200-.6 1.900" fill="none" stroke="#111" stroke-width="1"/>
</svg>
<svg style="left:45.500px;top:264px" width="17" height="17" viewBox="0 0 17 17">
  <path d="M4.200 12l4-3.600" stroke="#d8d8d8" stroke-width="1.400"/>
  <circle cx="3.860" cy="12.300" r="2.900" fill="#0a9494" stroke="#111" stroke-width="1"/>
  <path d="M4.300 11.900l1.800-1.600" stroke="#f4f4f4" stroke-width="1.200"/>
  <path d="M5.300 5.100l3.900.2 1.900-3-.6-1q1-1.400 2.400-.6l3.100 2.700q.6 1.200-.6 1.900l-1.100-.4-1.800 2.900-.9 3.800z" fill="#f2f2f2" stroke="#1a1a9a" stroke-width="0.900" stroke-linejoin="round" stroke-dasharray="1.600 0.700"/>
  <path d="M10.500 1.300q1-1.400 2.400-.6l3.100 2.700q.6 1.200-.6 1.900" fill="none" stroke="#111" stroke-width="1"/>
</svg>
<div class="abs" style="left:64px;top:245px;width:33px;height:18px;background:#0078d7"></div><div class="t" style="left:65px;top:245.800px;color:#fff;transform:scaleX(0.857)">R Rail</div>
<div class="abs" style="left:64px;top:263px;width:32px;height:18px;background:#0078d7"></div><div class="t" style="left:65px;top:263.800px;color:#fff;transform:scaleX(0.893)">L Rail</div>
<div class="t" style="left:48.600px;top:281.800px;transform:scaleX(0.918)">H Rail</div>
<div class="t" style="left:48.600px;top:299.800px;transform:scaleX(0.918)">Head Base</div>
<div class="t" style="left:48.600px;top:317.800px;transform:scaleX(0.941)">Head</div>
<div class="t" style="left:48.600px;top:335.800px;transform:scaleX(0.694)">カメラ</div>
<div class="t" style="left:48.600px;top:353.800px;transform:scaleX(0.694)">ライト</div>
<svg style="left:27px;top:336px" width="17" height="16" viewBox="0 0 17 16">
  <circle cx="4" cy="3.500" r="3" fill="#fff" stroke="#111" stroke-width="1.200"/><circle cx="10" cy="3.500" r="3" fill="#fff" stroke="#111" stroke-width="1.200"/>
  <circle cx="4" cy="3.500" r="1.200" fill="#333"/><circle cx="10" cy="3.500" r="1.200" fill="#333"/>
  <rect x="0.600" y="6.600" width="12.500" height="8.500" fill="#f2f2f2" stroke="#111" stroke-width="1.200"/>
  <rect x="2.500" y="9" width="8.500" height="4.500" fill="#8a86a8" stroke="#444" stroke-width="0.800"/>
  <path d="M13.500 9.500l2.500-2v7l-2.500-2z" fill="#999" stroke="#111" stroke-width="1"/>
</svg>
<svg style="left:27px;top:354px" width="17" height="16" viewBox="0 0 17 16">
  <circle cx="10.500" cy="10.500" r="4.300" fill="#e6e4c8"/>
  <path d="M0.800 1l3-.500 4.500 6.500-3 2z" fill="#2b5cae" stroke="#1c3f80" stroke-width="0.800"/>
  <path d="M5.500 9l.5 3M8.300 6.500l4.500-.300" stroke="#2b5cae" stroke-width="1.200"/>
  <path d="M6 7l9 8" stroke="#e8202a" stroke-width="1"/>
</svg>
<div class="abs" style="left:4px;top:937px;width:218px;height:17px;background:#f0f0f0"></div>
<div class="abs" style="left:22px;top:944px;width:133px;height:2px;background:#7a7a7a"></div>
<div class="abs" style="left:3px;top:955px;width:60px;height:22px;background:#fdfdfd;border:1px solid #a0a0a0;border-top:none"></div>
<svg style="left:9px;top:958px" width="11" height="15" viewBox="0 0 11 15">
  <g fill="none" stroke="#7aa7d8" stroke-width="0.900"><path d="M5.500 2.500l-2 5-2.500 5.500M5.500 2.500l2 5 2.500 5.500M3.500 7.500l2 5.500M7.500 7.500l-2 5.500"/></g>
  <g fill="#d9ecb0" stroke="#7ab0dd" stroke-width="0.800"><rect x="4.300" y="1" width="2.400" height="2.400"/><rect x="2.300" y="6.500" width="2.400" height="2.400"/><rect x="6.300" y="6.500" width="2.400" height="2.400"/><rect x="0.500" y="11.800" width="2.400" height="2.400"/><rect x="4.300" y="11.800" width="2.400" height="2.400"/><rect x="8" y="11.800" width="2.400" height="2.400"/></g>
</svg>
<div class="t" style="left:25px;top:957px;font-size:13px;color:#333;transform:scaleX(0.821)">シーン</div>
<svg style="left:71px;top:958px" width="11" height="16" viewBox="0 0 11 16">
  <rect x="0.500" y="0.500" width="10" height="15" fill="#fff" stroke="#777" stroke-width="1"/>
  <rect x="1.500" y="2" width="6" height="5" fill="#3f7ac0"/>
  <path d="M3 9.500h6M2 12.500h6" stroke="#7f9ec8" stroke-width="1"/><circle cx="3" cy="9.500" r="1" fill="#5f86b8"/><circle cx="7.500" cy="12.500" r="1" fill="#5f86b8"/>
</svg>
<div class="t" style="left:86.400px;top:957px;font-size:13px;color:#333;transform:scaleX(0.717)">プロパティ</div>
<svg style="left:144px;top:957px" width="16" height="16" viewBox="0 0 16 16">
  <circle cx="6" cy="6" r="4.800" fill="#f2f8fc" stroke="#8fa6b8" stroke-width="1.300"/>
  <path d="M9.500 9.500l5 5" stroke="#555" stroke-width="2.400" stroke-linecap="round"/>
</svg>
<div class="t" style="left:162.300px;top:957px;font-size:13px;color:#333;transform:scaleX(0.969)">検索</div>
<!-- right panel -->
<div class="t" style="left:935px;top:143.500px;font-size:13px;color:#444;transform:scaleX(0.750)">スタート</div>
<svg style="left:1128px;top:147px" width="30" height="12" viewBox="0 0 30 12">
  <path d="M1 4h9.500l-4.750 5z" fill="#6f6f6f"/>
  <path d="M22 1.500h4v5.500h-4zM20.500 7.500h7M24 7.500v3.500" fill="none" stroke="#666" stroke-width="1.100"/>
  <rect x="24.500" y="2" width="1.500" height="5" fill="#666"/>
</svg>
<div class="cbtn" style="left:932.500px;width:55px"></div>
<div class="cbtn" style="left:990.300px;width:55px"></div>
<div class="cbtn" style="left:1048.400px;width:55px"></div>
<div class="cbtn" style="left:1106.500px;width:55px"></div>
<div class="abs" style="left:939px;top:167.500px;width:15px;height:15px;background:#ece9d8"></div>
<div class="abs" style="left:996px;top:167.500px;width:16px;height:15px;background:#ece9d8"></div>
<div class="abs" style="left:1054px;top:167.500px;width:16px;height:15px;background:#ece9d8"></div>
<div class="abs" style="left:1112px;top:167.500px;width:16px;height:15px;background:#ece9d8"></div>
<svg style="left:939px;top:167.500px" width="15" height="15" viewBox="0 0 15 15">
  <path d="M1.500 1h11l-1.500 3v10h-9.500z" fill="#f8f8f8" stroke="#6a6a6a" stroke-width="1.300"/>
  <g fill="#c4c4c4"><rect x="4" y="4" width="2.500" height="2.500"/><rect x="7.500" y="4" width="2.500" height="2.500"/><rect x="4" y="8.500" width="2.500" height="2.500"/><rect x="7.500" y="8.500" width="2.500" height="2.500"/></g>
</svg>
<svg style="left:996px;top:167.500px" width="16" height="15" viewBox="0 0 16 15">
  <path d="M1 1.500l5 1.500v10.500l-5-2z" fill="#d5dadd" stroke="#8f969b" stroke-width="1"/>
  <path d="M6 1h6v12h-6z" fill="#fafafa" stroke="#b8b8b8" stroke-width="0.800"/>
  <path d="M12 9l3 3-3 3" fill="none" stroke="#a9a9a9" stroke-width="1"/>
</svg>
<svg style="left:1054px;top:167.500px" width="16" height="15" viewBox="0 0 16 15">
  <rect x="5" y="1" width="9" height="10" fill="#fafafa" stroke="#a8a8a8" stroke-width="0.900"/>
  <path d="M7 3.500h5M7 5.500h5" stroke="#c0c0c0"/>
  <path d="M1 5h9.500l1.500 1.500v7.500h-11z" fill="#7b7a3a" stroke="#5a5a2a" stroke-width="0.800"/>
  <rect x="3" y="5.500" width="6" height="3.500" fill="#e9e9e9"/><rect x="3.500" y="11" width="5" height="3" fill="#4a4a4a"/><rect x="4.500" y="11.500" width="1.500" height="2" fill="#d0d0d0"/>
</svg>
<svg style="left:1112px;top:167.500px" width="16" height="15" viewBox="0 0 16 15">
  <rect x="1" y="1" width="10.500" height="11" fill="#e2e2e2" stroke="#9a9a9a" stroke-width="1"/>
  <path d="M12 3l1 1v4M12.500 11c2 0 2 3 0 3" fill="none" stroke="#a9a9a9" stroke-width="0.900"/>
</svg>
<div class="t" style="left:957.500px;top:167px;color:#111;transform:scaleX(1.000)">新規</div>
<div class="t" style="left:1018.800px;top:167px;color:#111;transform:scaleX(0.708)">開く</div>
<div class="t" style="left:1074px;top:167px;color:#111;transform:scaleX(0.979)">保存</div>
<div class="t" style="left:1128.800px;top:167px;color:#111;transform:scaleX(0.833)">閉じる</div>
<div class="abs" style="left:931px;top:185px;width:232px;height:20px;background:#fff"></div>
<div class="t" style="left:932.400px;top:184.500px;font-size:12.500px;color:#6d6d6d;transform:scaleX(0.934)">検索...</div>
<div class="abs" style="left:1144px;top:186.500px;width:18px;height:17px;background:#ece9d8;border:1px solid #cfcfca;border-radius:3px"></div>
<svg style="left:1144px;top:186.500px" width="18" height="17" viewBox="0 0 18 17"><path d="M3.200 3.300l11.600 11.200M14.800 3.300L3.200 14.500" stroke="#fb5a44" stroke-width="2" fill="none"/></svg>
<div id="cat" class="abs"></div>
<div class="abs" style="left:1145px;top:206px;width:17px;height:728px;background:#f0f0f0"></div>
<div class="abs" style="left:1152px;top:224px;width:2px;height:453px;background:#7a7a7a"></div>
<!-- object viewer strip -->
<div class="abs" style="left:1186px;top:147px;width:6px;height:75px;background:#d0d0d0"></div>
<div class="abs" style="left:1182px;top:148.500px;width:0;height:0;transform-origin:0 0;transform:rotate(90deg)"><div class="t" style="left:0;top:0;font-size:12px;color:#444;transform:scaleX(0.973)">Object Viewer</div></div>
<!-- bottom row -->
<div class="abs" style="left:933.500px;top:937px;width:55.500px;height:16px;background:#ececec;border-radius:3px"></div>
<div class="abs" style="left:952px;top:937px;width:37px;height:16px;background:#efefef;border-radius:3px"></div>
<svg style="left:938px;top:938px" width="16" height="14" viewBox="0 0 16 14"><path d="M1 7l7-6v3.500h7.500v5h-7.500v3.500z" fill="#b5b5b5"/></svg>
<div class="t" style="left:960.500px;top:937px;color:#888;transform:scaleX(0.875)">戻る</div>
<div class="abs" style="left:992.500px;top:936.500px;width:118.500px;height:17px;background:#fcfcfc;border:1px solid #cfcfcf;border-radius:4px"></div>
<div class="t" style="left:1015px;top:937px;color:#111;transform:scaleX(0.764)">すべてのカタログ</div>
<div class="abs" style="left:1115px;top:937px;width:46px;height:16px;background:#f4f4f4;border-radius:4px"></div>
<div class="abs" style="left:931px;top:955px;width:232px;height:1px;background:#bdbdbd"></div>
<div class="abs" style="left:931px;top:955px;width:51px;height:22px;background:#fdfdfd;border:1px solid #a8a8a8;border-top-color:#fdfdfd"></div>
<div class="t" style="left:937px;top:957px;font-size:13px;color:#333;transform:scaleX(0.754)">スタート</div>
<div class="t" style="left:989px;top:957px;font-size:13px;color:#444;transform:scaleX(0.727)">シェイプ</div>
<div class="t" style="left:1040px;top:957px;font-size:13px;color:#444;transform:scaleX(0.821)">拡張シェイプ</div>
<div class="t" style="left:1117.200px;top:957px;font-size:13px;color:#444;transform:scaleX(0.908)">色</div>
<svg style="left:1149px;top:962px" width="9" height="8" viewBox="0 0 9 8"><rect x="1" y="0.500" width="7" height="1.500" fill="#666"/><path d="M1 3.500h7l-3.500 3.800z" fill="#666"/></svg>
<svg style="left:0;top:0" width="1195" height="1002" viewBox="0 0 1195 1002">
<defs>
  <linearGradient id="gTop" x1="0" y1="0" x2="1" y2="1"><stop offset="0" stop-color="#e3efe6"/><stop offset="1" stop-color="#c3d6cb"/></linearGradient>
  <linearGradient id="gSideL" x1="0" y1="0" x2="1" y2="0"><stop offset="0" stop-color="#9fbcbb"/><stop offset="1" stop-color="#b6cfcc"/></linearGradient>
  <linearGradient id="gSideR" x1="0" y1="0" x2="1" y2="0"><stop offset="0" stop-color="#b9cbbd"/><stop offset="1" stop-color="#a3b8ad"/></linearGradient>
  <linearGradient id="gCyl" x1="0" y1="0" x2="1" y2="0"><stop offset="0" stop-color="#9db9b6"/><stop offset=".3" stop-color="#c3d8d3"/><stop offset=".55" stop-color="#a9c2bb"/><stop offset="1" stop-color="#b4c8bb"/></linearGradient>
  <radialGradient id="gSph" cx=".5" cy=".55" r=".55"><stop offset="0" stop-color="#dff0ee"/><stop offset=".65" stop-color="#bdd6d0"/><stop offset="1" stop-color="#9db5aa"/></radialGradient>
  <linearGradient id="gIn" x1="0" y1="0" x2="1" y2="1"><stop offset="0" stop-color="#a9adc4"/><stop offset="1" stop-color="#eceef5"/></linearGradient>
</defs>
<!-- row0 block -->
<path d="M984.300 210.700l14.400 5.300-15 4.500-12.800-5.100z" fill="url(#gTop)"/>
<path d="M970.900 215.400l12.800 5.100v19.100l-11.700-7.400z" fill="url(#gSideL)"/>
<path d="M983.700 220.500l15-4.500-.9 16.200-14.100 7.400z" fill="url(#gSideR)"/>
<!-- block hole -->
<path d="M1077 229l12 5v5.200l-11-5z" fill="#f1f1f3"/><path d="M1089 234l7-5.500v5.200l-7 5.500z" fill="#dcdcdf"/>
<path d="M1082.800 211.600l18.200 6.900-13.700 15.100-18.500-10.600z" fill="#2f3187"/>
<path d="M1083.500 215l13.500 4-9 10.200-13.200-6.800z" fill="#eef0f6"/>
<path d="M1083.500 215l13.500 4-5.500 2.500-5.500-2z" fill="#b9bdd0"/><path d="M1083.500 215l2.500 4.500-2 6.500-9.200-3.600z" fill="#cfd2e0"/><path d="M1086 219.500l5.500 2-3.500 7.700-4-3.200z" fill="#a7abc2"/>
<!-- row1 cylinder -->
<path d="M971.300 293v13c0 5.500 6 9.800 13.400 9.800s13.300-4.300 13.300-9.800v-13z" fill="url(#gCyl)"/>
<ellipse cx="984.650" cy="293" rx="13.350" ry="8" fill="url(#gTop)"/>
<!-- cyl hole -->
<path d="M1077.500 304v6c0 2.400 3.400 4 7.500 4s7.500-1.600 7.500-4v-6z" fill="#e9e9ec"/>
<path d="M1084.500 285.600l16.700 12.700-15.500 12.500-16.700-13.800z" fill="#2f3187"/>
<ellipse cx="1085" cy="297.500" rx="9" ry="6.800" fill="#c4c7d6" transform="rotate(-12 1085 297.500)"/>
<ellipse cx="1085.600" cy="301" rx="6.800" ry="3.600" fill="#fff" transform="rotate(-8 1085.600 301)"/>
<path d="M1077 295.500c2-5 12-7 16.500-2.500-3-2-12-1.500-16.500 2.500z" fill="#eef0f6"/>
<!-- row2 slot -->
<path d="M972.200 366.500l1.300 13.500 13 9c3.500 1.500 10.500-1 11.400-5.500l1-13.500z" fill="url(#gCyl)"/>
<path d="M972.200 366.500c0-4 5.500-6.500 10-5.200l12.500 4c4 1.500 5.500 5.500 3.500 8-2.500 3-8 3.800-11.500 2.500l-12-5.500c-1.500-.8-2.500-2.200-2.500-3.800z" fill="url(#gTop)"/>
<!-- slot hole -->
<path d="M1079.500 380l2.500 6.500c2 3 8 3 9.500 0l1.500-6z" fill="#e8e8eb"/>
<path d="M1077.500 360.300l23.100 8.200-5.500 20.700-26.100-12z" fill="#2f3187"/>
<path d="M1078.500 364.500c3-2.800 7-1.500 9 .8l7.500 8.500c2.500 3 2 6.500-.5 7.800-3 1.500-6 .2-8-2l-7.500-8.500c-2-2.300-2.500-4.800-.5-6.600z" fill="#d9dbe6"/>
<path d="M1081 368c2-1.800 4.500-.8 6 .8l6 7c1.500 2 1.200 4-.3 5-2 1.200-4.200 0-5.700-1.600l-5.800-6.800c-1.400-1.600-1.600-3.300-.2-4.400z" fill="#fff"/>
<!-- row3 elliptic cylinder -->
<path d="M970.900 447l1.600 13c1 3.500 5 4.600 9.500 3.500 7-1.800 13.500-7 15-12l1-12z" fill="url(#gCyl)"/>
<ellipse cx="984.400" cy="443.200" rx="14" ry="7.300" fill="url(#gTop)" transform="rotate(-19 984.400 443.200)"/>
<!-- ell hole -->
<path d="M1076.500 455v5c1 3 6 4.500 10.500 2.500 4-1.800 6.500-4.500 6.500-7.500z" fill="#e6e6ea"/>
<path d="M1086 435.600l15 11-16.500 14.300-15.500-13.900z" fill="#2f3187"/>
<ellipse cx="1085.500" cy="447.500" rx="9.300" ry="6.200" fill="#c4c7d6" transform="rotate(-25 1085.500 447.500)"/>
<ellipse cx="1085.200" cy="450.800" rx="6.600" ry="3.400" fill="#fff" transform="rotate(-25 1085.200 450.800)"/>
<path d="M1077.500 447.500c1-5.500 10-9.500 15.500-6-4-1-12-.5-15.500 6z" fill="#eef0f6"/>
<!-- row4 polygon prism -->
<path d="M970.700 521l7.800-6 9.700 12.700-2.500 11.500-12-6z" fill="#c8e5e1"/>
<path d="M988.200 527.700l8.600 1.500-3.600 5-7.500 5z" fill="#a9c2ba"/>
<path d="M978.500 515l13.500-4 8.800 9.500-4 8.700-8.600-1.500z" fill="#a3bab2"/>
<!-- poly hole -->
<path d="M1086 534l10-13.500c4 1 6 5 4.500 9-1.500 4.500-6 9-10.500 9.700z" fill="#e6e6ea"/>
<path d="M1081.500 511.200l19.700 1.300-14 22.500-18.200-4.500z" fill="#2f3187"/>
<path d="M1085 514.500l5.500-.5 3.500 3.500-1 5.500-6.500 6.200-5.500-1.200-2-4 2-6z" fill="#e9ebf2"/>
<path d="M1083.500 517l5-1 2.500 4-7.500 7.500-3-3z" fill="#b9bccd"/><path d="M1088.500 516l2.500 4-7.500 7.500 5 .8 5.500-5.500.8-4.800z" fill="#cfd1de"/>
<!-- row5 sphere -->
<circle cx="984.800" cy="599.300" r="14.100" fill="url(#gSph)"/>
<ellipse cx="983" cy="595.500" rx="4" ry="3.500" fill="#9fc0cf" opacity=".6"/><ellipse cx="987" cy="603" rx="7" ry="5" fill="#e6f4f0" opacity=".75"/><ellipse cx="980" cy="594" rx="5" ry="3" fill="#f2f8f6" opacity=".5" transform="rotate(-40 980 594)"/>
<circle cx="984.800" cy="599.300" r="13.500" fill="none" stroke="#93aba3" stroke-width="1"/>
<!-- sphere hole -->
<path d="M1078.500 606.500l6 4.500 4-2-4-5z" fill="#ececef"/>
<path d="M1085.500 586.500l15.100 1.500-3.600 6-14 12.500-14-5z" fill="#2f3187"/>
<path d="M1078 598c1-6 8-10 14-9.500 6 .5 8.500 5 8 10-.6 6-4.500 11.500-9.500 12.500-3 .6-5-1.500-6.500-5-2 .5-4.500-.5-5.500-2.500-.8-1.700-.8-3.500-.5-5.500z" fill="#d5d8e4" stroke="#4a4c94" stroke-width="0.700"/>
<path d="M1084 606c2-5 7-10 14-13" fill="none" stroke="#a9adc6" stroke-width="0.800"/>
<path d="M1080 595.500c3-3.500 9-5.500 13.500-4-5 0-10 1.500-13.500 4z" fill="#f4f5fa"/>
<!-- row6 bolts -->
<g stroke="#bdd2c9" stroke-width="2.600" stroke-linecap="round">
<path d="M975.1 665.5l7.5 -5.1"/><path d="M984.3 665.5l7.5 -5.1"/><path d="M993.5 665.5l5.5 -3.74"/>
<path d="M975.1 675l7.5 -5.1"/><path d="M984.3 675l7.5 -5.1"/><path d="M993.5 675l5.5 -3.74"/>
<path d="M975.1 684.3l7.5 -5.1"/><path d="M984.3 684.3l7.5 -5.1"/><path d="M993.5 684.3l5.5 -3.74"/>
</g>
<g><ellipse cx="973.6" cy="666.5" rx="3.400" ry="2.700" fill="#9fb5ab"/><ellipse cx="982.8" cy="666.5" rx="3.400" ry="2.700" fill="#9fb5ab"/><ellipse cx="992" cy="666.5" rx="3.400" ry="2.700" fill="#9fb5ab"/><ellipse cx="973.6" cy="676" rx="3.400" ry="2.700" fill="#9fb5ab"/><ellipse cx="982.8" cy="676" rx="3.400" ry="2.700" fill="#9fb5ab"/><ellipse cx="992" cy="676" rx="3.400" ry="2.700" fill="#9fb5ab"/><ellipse cx="973.6" cy="685.3" rx="3.400" ry="2.700" fill="#9fb5ab"/><ellipse cx="982.8" cy="685.3" rx="3.400" ry="2.700" fill="#9fb5ab"/><ellipse cx="992" cy="685.3" rx="3.400" ry="2.700" fill="#9fb5ab"/></g>
<!-- bolt hole pattern -->
<path d="M1087 684.500l10-14 3.500 2-2 4 2.500 1.500-2.500 4 1.500 1.500-5 6.500-4-1.500z" fill="#dedee2"/>
<path d="M1081.500 661.200l19.600 1.300-14.100 23-18-5.500z" fill="#2f3187"/>
<g fill="#e8e9c8"><ellipse cx="1083" cy="665.700" rx="2" ry="1.300" transform="rotate(-25 1083 665.700)"/><ellipse cx="1087.500" cy="666.400" rx="2" ry="1.300" transform="rotate(-25 1087.500 666.400)"/><ellipse cx="1092" cy="667.100" rx="2" ry="1.300" transform="rotate(-25 1092 667.100)"/>
<ellipse cx="1079.500" cy="671.300" rx="2" ry="1.300" transform="rotate(-25 1079.500 671.300)"/><ellipse cx="1084" cy="672.200" rx="2" ry="1.300" transform="rotate(-25 1084 672.200)"/><ellipse cx="1088.500" cy="673.100" rx="2" ry="1.300" transform="rotate(-25 1088.500 673.100)"/>
<ellipse cx="1076" cy="676.800" rx="2" ry="1.300" transform="rotate(-25 1076 676.800)"/><ellipse cx="1080.500" cy="677.900" rx="2" ry="1.300" transform="rotate(-25 1080.500 677.900)"/><ellipse cx="1085" cy="679" rx="2" ry="1.300" transform="rotate(-25 1085 679)"/></g>
<!-- row7 spin -->
<path d="M973.200 748v5c0 4 5 7 11.400 7s11.500-3 11.500-7v-5z" fill="#a9b6b9"/>
<ellipse cx="984.650" cy="748" rx="11.450" ry="7.300" fill="#f3f5f4"/>
<ellipse cx="984.650" cy="747.300" rx="4" ry="2.700" fill="#98a4a8"/>
<path d="M984.650 750v10" stroke="#8fc6d0" stroke-width="0.700"/>
<!-- spin hole -->
<ellipse cx="1084.900" cy="752.500" rx="11" ry="7.300" fill="#a9b4ba" stroke="#343691" stroke-width="2"/>
<ellipse cx="1084.900" cy="747.500" rx="10.500" ry="7" fill="#98a5ab" stroke="#343691" stroke-width="2.500"/>
<ellipse cx="1084.900" cy="750" rx="8" ry="4.300" fill="#fff"/>
<!-- row8 through hole round -->
<path d="M984.650 820l11.700 8.500-11.700 8.500-11.700-8.500z" fill="#3a3c94"/>
<path d="M984.650 813.100l11.700 9-11.700 9-11.700-9z" fill="#3a3c94"/>
<path d="M979.800 828.500c1.500 3.500 8 3.500 9.700 0" fill="none" stroke="#8a8db8" stroke-width="1"/>
<ellipse cx="984.650" cy="821.500" rx="5" ry="4" fill="#9ea5ac"/><ellipse cx="984.650" cy="823.500" rx="3.600" ry="2" fill="#f2f2f2"/>
<!-- through hole square -->
<path d="M1084.700 821l11.500 8-11.500 8-11.500-8z" fill="#9aa2a8" stroke="#3a3c94" stroke-width="1.800"/>
<path d="M1084.700 814l10.500 8-10.500 8.500-10.500-8.500z" fill="#9ea7ae" stroke="#3a3c94" stroke-width="2.200"/>
<path d="M1084.700 820l4.800 3.500-4.800 3.800-4.800-3.800z" fill="#fff"/>
<!-- row9 2D squares -->
<rect x="971.700" y="886.800" width="25.300" height="25.300" fill="#fff" stroke="#000" stroke-width="1.600"/>
<path d="M982.700 903v-8M980.700 897l2-2.300 2 2.300" fill="none" stroke="#3fc03f" stroke-width="1"/><path d="M982.700 902.500h8M988.500 900.500l2.300 2-2.300 2" fill="none" stroke="#f03818" stroke-width="1"/>
<rect x="1071.900" y="886.800" width="25.300" height="25.300" fill="#fff" stroke="#000" stroke-width="1.600"/>
<path d="M1071.500 912v-7M1069.700 907.300l1.800-2.300 1.800 2.300" fill="none" stroke="#2fa82f" stroke-width="1.200"/><path d="M1071.500 912.500h7.500M1077 910.500l2.300 2-2.300 2" fill="none" stroke="#f03818" stroke-width="1.200"/>
</svg>
<!-- catalog labels -->
<div class="t" style="left:967px;top:243px;color:#1a1a1a;transform:scaleX(0.717)">ブロック</div>
<div class="t" style="left:1060px;top:243px;color:#1a1a1a;transform:scaleX(0.789)">ブロック 穴</div>
<div class="t" style="left:973px;top:318px;color:#1a1a1a;transform:scaleX(1.000)">円柱</div>
<div class="t" style="left:1065.3px;top:318px;color:#1a1a1a;transform:scaleX(0.984)">円柱 穴</div>
<div class="t" style="left:968px;top:393px;color:#1a1a1a;transform:scaleX(0.717)">スロット</div>
<div class="t" style="left:1059.7px;top:393px;color:#1a1a1a;transform:scaleX(0.774)">スロット 穴</div>
<div class="t" style="left:967.5px;top:468px;color:#1a1a1a;transform:scaleX(0.986)">楕円柱</div>
<div class="t" style="left:1059px;top:468px;color:#1a1a1a;transform:scaleX(0.984)">楕円柱 穴</div>
<div class="t" style="left:967.5px;top:543px;color:#1a1a1a;transform:scaleX(0.986)">多角柱</div>
<div class="t" style="left:1059px;top:543px;color:#1a1a1a;transform:scaleX(0.984)">多角柱 穴</div>
<div class="t" style="left:979.5px;top:618px;color:#1a1a1a;transform:scaleX(0.983)">球</div>
<div class="t" style="left:1071.8px;top:618px;color:#1a1a1a;transform:scaleX(0.940)">球 穴</div>
<div class="t" style="left:957px;top:693px;color:#1a1a1a;transform:scaleX(0.868)">ボルト 角形</div>
<div class="t" style="left:1049px;top:693px;color:#1a1a1a;transform:scaleX(0.902)">ボルト 穴 角形</div>
<div class="t" style="left:971px;top:768px;color:#1a1a1a;transform:scaleX(0.739)">スピン</div>
<div class="t" style="left:1064px;top:768px;color:#1a1a1a;transform:scaleX(0.804)">スピン 穴</div>
<div class="t" style="left:953.5px;top:843px;color:#1a1a1a;transform:scaleX(0.985)">貫通穴 円形</div>
<div class="t" style="left:1053.6px;top:843px;color:#1a1a1a;transform:scaleX(0.979)">貫通穴 角形</div>
<div class="t" style="left:937.5px;top:918px;color:#1a1a1a;transform:scaleX(0.957)">2D図形 - 原点が図</div>
<div class="t" style="left:1037.8px;top:918px;color:#1a1a1a;transform:scaleX(0.953)">2D図形 - 原点が図</div>
<!-- viewport -->
<div class="abs" style="left:228px;top:162px;width:1px;height:817px;background:#f4f4f4"></div>
<div class="abs" style="left:228px;top:978px;width:698px;height:1px;background:#f4f4f4"></div>
<div id="view" class="abs"></div>
<svg style="left:229px;top:162px;overflow:hidden" width="696" height="816" viewBox="229 162 696 816">
<defs>
  <linearGradient id="pinG" x1="0" y1="0" x2="1" y2="0"><stop offset="0" stop-color="#7f858a"/><stop offset=".35" stop-color="#e4e8ea"/><stop offset=".7" stop-color="#9aa0a5"/><stop offset="1" stop-color="#6f757a"/></linearGradient>
</defs>
<!-- dimension lines -->
<g stroke="#c9c9c9" stroke-width="1.700" fill="none" stroke-linecap="butt">
  <path d="M298.500 602L228 665.500"/>
  <path d="M299 601.500L653.500 752"/>
  <path d="M653 753L549.700 847.500M526.400 868.700L422.700 962.200"/>
  <path d="M270.800 896.900L422.700 962.200"/>
  <path d="M652 751h5v6.500h-5" stroke-width="1.200"/>
  <path d="M427.5 953.3L422.7 962.2L432.0 958.4" stroke-width="2.200" stroke-linejoin="miter"/>
  <path d="M412.6 961.6L422.7 962.2L415.3 955.3" stroke-width="2.200"/>
  <path d="M648.5 761.5L653.2 752.6L643.9 756.5" stroke-width="2.200"/>
</g>
<!-- LEFT RAIL -->
<g>
  <path d="M278.500 567.300L509.400 358.400l20.200 9.200L300 575.500z" fill="#8b9194"/>
  <path d="M281.400 570.500L512.500 361.500l11.500 6L295.500 576z" fill="#8f9497"/>
  <path d="M300 575.500L529.600 367.600v24.900L299.500 601.400z" fill="#7c8896"/>
  <path d="M278.500 567.300l3 1.300-.4 3 14.400 5.600.6-3.600 3.900 1.900-.5 25.900-22.100-10.400z" fill="#9b9ca3"/>
  <g stroke="#18f0f4" fill="none" stroke-width="1.300">
    <path d="M278.500 567.300L509.400 358.400"/><path d="M280 568.200L510.800 359.200" stroke-width="1.600"/><path d="M281.800 570.800L512.800 362" stroke-width="1"/>
    <path d="M294.800 576.600L524 369.400" stroke-width="1"/><path d="M296.600 574L526.800 365.400"/><path d="M300 575.500L529.600 367.600" stroke-width="1.100"/>
    <path d="M299.500 601.400L529.600 392.500" stroke-width="1.200"/>
    <path d="M529.600 367.600v24.900" stroke-width="1.100"/>
    <path d="M509.400 358.400q2-1.300 3.600 0l.3 3.700 10.700 5.400 1.300-3.200q2.300-.6 4.300 1.300" stroke-width="1.200"/>
    <path d="M278.500 567.300l3 1.300-.4 3 14.400 5.600.6-3.600 3.900 1.900" stroke-width="1.200"/>
    <path d="M278.500 567.300L277.400 591l22.100 10.400" stroke-width="1.200"/>
  </g>
</g>
<!-- RIGHT RAIL -->
<g>
  <path d="M633.300 718.600L864.300 510.500l19.100 7.500L654.200 727.200z" fill="#8b9194"/>
  <path d="M654.200 727.200L883.400 518v25.700L654.200 750.300z" fill="#7c8896"/>
  <path d="M633.300 718.600l3.400 1.300-1.600 2.700 16.100 7.100-.5-4.600 3.500 2.100v23.100l-22.300-6.600z" fill="#9a9ba1"/>
  <g stroke="#18f0f4" fill="none" stroke-width="1.300">
    <path d="M633.300 718.600L864.300 510.500"/><path d="M634.900 719.500L865.800 511.300" stroke-width="1.600"/><path d="M636.700 722L867.600 513.900" stroke-width="1"/>
    <path d="M650 729.200L879.200 521" stroke-width="1"/><path d="M651.400 726.200L881 516.800"/><path d="M654.200 727.200L883.400 518" stroke-width="1.100"/>
    <path d="M654.200 750.300L883.400 543.700" stroke-width="1.200"/>
    <path d="M883.400 518v25.700" stroke-width="1.100"/>
    <path d="M864.300 510.500q2-1.300 3.500 0l.3 3.600 10 4.800 1.200-3q2.300-.6 4.100 1.100" stroke-width="1.200"/>
    <path d="M633.300 718.600l3.400 1.300-1.600 2.700 16.100 7.100-.5-4.600 3.500 2.100" stroke-width="1.200"/>
    <path d="M633.300 718.600L631.900 743.700M654.200 727.200v23.100" stroke-width="1.200"/>
  </g>
</g>
<!-- redraw grey line over right rail's lower-left -->
<path d="M600 730.200L653.500 752" stroke="#c9c9c9" stroke-width="1.700" fill="none"/>
<!-- PLATE -->
<g stroke="#2c2c2c" stroke-width="0.900" stroke-linejoin="round">
  <path d="M415.100 511.900l27.600 10.800v3.600l-27.600-10.800z" fill="#a6a7ab"/>
  <path d="M442.700 522.700l35.500-32.200v3.600l-35.500 32.200z" fill="#8b97a3"/>
  <path d="M451 478.400l27.200 12.100-35.500 32.200-27.600-10.800z" fill="#888e90"/>
</g>
<ellipse cx="437.400" cy="509.100" rx="4" ry="2.800" fill="#b9bdc0" stroke="#3a3a3a" stroke-width="0.800"/>
<ellipse cx="438" cy="509.800" rx="2.400" ry="1.500" fill="#70767a"/>
<!-- H BEAM -->
<g stroke="#2a2a2a" stroke-width="0.900" stroke-linejoin="round">
  <path d="M354.700 400.400L729.500 558.400v18.200l-4.200.9-14.300-7.300-3.200-8L375.900 421.900l-4.600 4.300-15.700-6.700-1.800-5.900z" fill="#9c9da2"/>
  <path d="M354.700 400.400l13.800-12.200L742.200 548.500l-12.700 9.900z" fill="#868c8f"/>
  <path d="M729.500 558.400l12.700-9.900v16.900l-12.700 11.200z" fill="#6f787f"/>
</g>
<path d="M731.500 560.500l9-7v11l-9 8z" fill="#8a949c"/>
<path d="M355.600 419.500l1.800-1.500M371.300 426.200l1-3M711 570.200l1.500-2M725.300 577.500l1-2.500" stroke="#2a2a2a" stroke-width="0.800"/>
<!-- PIN -->
<path d="M379.800 587.600c0-5.300 17-5.300 17 0l-9.200 13z" fill="#c01414"/>
<ellipse cx="388.300" cy="587.300" rx="8.500" ry="3.900" fill="#d01c1c"/>
<path d="M384 589l3.600 11.600 1.600-11.600z" fill="#e84040"/>
<rect x="385.900" y="554" width="8.700" height="35.600" fill="url(#pinG)"/>
<ellipse cx="390.250" cy="589.600" rx="4.350" ry="1.800" fill="#9aa0a5"/>
<ellipse cx="390.250" cy="554.100" rx="4.350" ry="2.700" fill="#b9bdc0" stroke="#444" stroke-width="0.700"/>
<!-- AXES -->
<path d="M299.900 601.700V563" stroke="#1212f0" stroke-width="1.300"/>
<path d="M299 601.400L325.600 576.900" stroke="#22e022" stroke-width="1.200"/>
<path d="M299 601.500L340.300 619.700" stroke="#f03030" stroke-width="1.600" stroke-dasharray="1.300 0.900"/>
<path d="M297.800 550.400h6.800l-6.800 8.800h6.800" fill="none" stroke="#1212f0" stroke-width="1.300"/>
<path d="M328.400 568.500l3.900 4.600 4-4.600M332.300 573.100v4.900" fill="none" stroke="#22e022" stroke-width="1.200"/>
<path d="M345.300 619.200l7.600 9.400M352.900 619.200l-7.600 9.400" fill="none" stroke="#f01818" stroke-width="1.300"/>
<!-- small triad -->
<path d="M266.300 942V931" stroke="#4848e8" stroke-width="3.400"/><path d="M262.800 932.500l3.600-6.700 3.400 6.700z" fill="#2a2ab8"/>
<path d="M267 941l6-6" stroke="#58e058" stroke-width="3.400"/><path d="M271.500 933.500l5-1.300-2 5z" fill="#109010"/>
<path d="M268 943.500l9 3.500 6 1.800-5.500-6.300z" fill="#f08484"/><path d="M268 942.300l4 1.500" stroke="#a01010" stroke-width="1.200"/>
<rect x="263.700" y="941" width="3.600" height="3.600" fill="#fff"/>
<path d="M265.500 915.300h5.200l-5.200 5.400h5.200" fill="none" stroke="#1212f0" stroke-width="1.200"/>
<path d="M280 924l2.500 3 2.600-3M282.500 927v3.200" fill="none" stroke="#18e018" stroke-width="1.200"/>
<path d="M288.200 948.200l4.800 5.800M293 948.200l-4.800 5.800" fill="none" stroke="#f01818" stroke-width="1.200"/>
</svg>
<div class="clip" style="left:229px;top:870px;width:696px;height:108px">
  <div class="t" style="left:-15.500px;top:5px;font-size:15px;letter-spacing:0.3px;line-height:20px;height:20px;color:#c6c6c6;transform:scaleX(0.982)">-500.000</div>
  <div class="t" style="left:175.900px;top:96.700px;font-size:15px;letter-spacing:0.3px;line-height:20px;height:20px;color:#c6c6c6;transform:scaleX(0.935)">0.000</div>
</div>
<div class="t" style="left:508.900px;top:846.700px;font-size:15px;letter-spacing:0.3px;line-height:20px;height:20px;color:#c6c6c6;transform:scaleX(0.931)">-500.000</div>
<!-- status bar -->
<div id="status" class="abs"></div>
<div class="t" style="left:5px;top:981.500px;font-size:13px;color:#222;transform:scaleX(0.962)">完了</div>
<div class="t" style="left:251px;top:981.500px;font-size:13px;color:#222;transform:scaleX(0.779)">ビューサイズ:</div>
<div class="t" style="left:320.600px;top:982px;font-size:12px;color:#222;transform:scaleX(0.919)">698 x&nbsp; 818</div>
<svg style="left:386px;top:982px" width="12" height="16" viewBox="0 0 12 16">
  <rect x="5.500" y="0.500" width="6" height="15" fill="#f3b64a" stroke="#c98a1e" stroke-width="1"/>
  <path d="M8.500 3h3M9.500 5.500h2M8.500 8h3M9.500 10.500h2M8.500 13h3" stroke="#7a5510" stroke-width="0.800"/>
  <rect x="0.500" y="3.500" width="3.500" height="3.500" fill="#f3b64a" stroke="#c98a1e" stroke-width="0.800"/>
</svg>
<div class="t" style="left:404px;top:981.500px;font-size:13px;color:#222;transform:scaleX(0.945)">単位:</div>
<div class="t" style="left:445px;top:982px;font-size:12px;color:#222;transform:scaleX(1.017)">mm, deg</div>
<svg style="left:500px;top:979px" width="330" height="22" viewBox="500 979 330 22">
  <!-- zoom icons -->
  <g><circle cx="513" cy="989.500" r="5.300" fill="#f2fafa" stroke="#8fb0b5" stroke-width="1.300"/><rect x="510" y="986.500" width="6" height="6" fill="none" stroke="#777" stroke-width="0.900"/><path d="M517 994l5 4.500" stroke="#555" stroke-width="2.200"/></g>
  <g><circle cx="536" cy="989.500" r="5.300" fill="#f2fafa" stroke="#8fb0b5" stroke-width="1.300"/><rect x="532.500" y="986" width="7" height="7" fill="none" stroke="#888" stroke-width="0.900"/><path d="M540 994l5 4.500" stroke="#555" stroke-width="2.200"/></g>
  <g fill="#333"><path d="M554.300 988.800h4.800l-2.400 2.900z"/><path d="M589.300 988.800h4.800l-2.400 2.900z"/><path d="M624.300 988.800h4.800l-2.400 2.900z"/><path d="M659.200 988.800h4.800l-2.400 2.900z"/><path d="M713.300 988.800h4.800l-2.400 2.900z"/><path d="M746 988.800h4.800l-2.400 2.900z"/></g>
  <!-- yellow cube -->
  <path d="M566.500 988l2.500-2.500h8.500v8.500l-2.500 2.500h-8.500z" fill="#f3d21e" stroke="#6a6a50" stroke-width="0.900"/>
  <path d="M575 988l2.500-2.500v8.500l-2.500 2.500z" fill="#a8b4c8" stroke="#6a6a50" stroke-width="0.700"/><path d="M566.500 988h8.500l2.500-2.500" fill="none" stroke="#6a6a50" stroke-width="0.700"/>
  <path d="M577.500 990.500h3.500M579.500 989l1.500 1.500-1.500 1.500" stroke="#d02020" stroke-width="0.900" fill="none"/>
  <!-- blue cube outline -->
  <path d="M600.500 987l3.500-3.500h11.500v11l-3.500 3.500h-11.500z" fill="#f4f6fa" stroke="#7f9ccc" stroke-width="1"/>
  <rect x="600.500" y="987" width="11.500" height="11" fill="#4f8fd6" stroke="#2f66b0" stroke-width="1"/>
  <path d="M612 987l3.500-3.500" stroke="#7f9ccc" stroke-width="0.800"/>
  <!-- mover icon -->
  <circle cx="642.500" cy="989.500" r="3" fill="#3f8fe0"/><path d="M636 989.500h2.500M642.500 984.500v1" stroke="#444" stroke-width="1.200"/>
  <rect x="643.500" y="990.500" width="7" height="6.500" fill="#555" stroke="#333" stroke-width="0.600"/><rect x="645" y="991" width="4" height="2" fill="#eee"/><rect x="645.500" y="994.500" width="3" height="2.500" fill="#ddd"/>
  <!-- wedge -->
  <path d="M671.500 990l4-4.500 9-1.500v8l-4 5.500h-9z" fill="#8fb0dc" stroke="#5a78a8" stroke-width="0.900"/>
  <path d="M671.500 990h9l4-6M680.500 990v7.500" fill="none" stroke="#5a78a8" stroke-width="0.700"/><path d="M680.500 990l4-6v8l-4 5.500z" fill="#6f90c4"/>
  <!-- glasses -->
  <g fill="#eef6f8" stroke="#7f9aa8" stroke-width="1"><ellipse cx="698" cy="993" rx="3" ry="3.600" transform="rotate(-15 698 993)"/><ellipse cx="705" cy="994.500" rx="2.800" ry="3.300" transform="rotate(-15 705 994.500)"/></g>
  <path d="M696 989.500l1.500-4.500M707 991.500l1.500-5c.5-1.200 1.500-1.200 1.800-.5" fill="none" stroke="#7f9aa8" stroke-width="1"/>
  <!-- blue cube -->
  <path d="M726.500 987.500l3.500-4h11.500v10.500l-3.500 4h-11.500z" fill="#4f8fd6" stroke="#2a5ea8" stroke-width="1"/>
  <path d="M726.500 987.500h11.500l3.500-4M738 987.500v10.500" fill="none" stroke="#2a5ea8" stroke-width="0.800"/><path d="M726.500 987.500l3.500-4h11.500l-3.500 4z" fill="#7fb0e8"/><path d="M738 987.500l3.500-4v10.500l-3.500 4z" fill="#3f78c0"/>
  <!-- grey arrow -->
  <path d="M760.500 992c0-4.500 4-5.500 7-5.500v-2.500l5 4.500-5 4.500v-2.500c-2.500 0-4 .5-4 3z" fill="#c0c0c0" stroke="#a8a8a8" stroke-width="0.700"/>
  <path d="M769.500 991v7l2-1.800 1.300 2.600 1-.5-1.300-2.500h2.300z" fill="#f8f8f8" stroke="#aaa" stroke-width="0.700"/>
  <!-- selected cursor -->
  <rect x="779" y="981" width="24" height="20" fill="#c9c9c9"/>
  <path d="M787 985.500v11.500l3-2.700 2.100 4.300 1.800-.9-2.100-4.200h4z" fill="#fff" stroke="#222" stroke-width="1"/>
  <!-- box cursor -->
  <rect x="807.500" y="984.500" width="13" height="7" fill="#fff" stroke="#c8c8c8" stroke-width="1"/>
  <path d="M814.500 988v9.500l2.400-2.200 1.600 3.300 1.500-.7-1.600-3.300h3.200z" fill="#fff" stroke="#222" stroke-width="0.900"/>
</svg>
<div class="abs" style="left:827px;top:981px;width:140px;height:20px;background:#fdfdfd;border:1px solid #c6c6c6"></div>
<div class="abs" style="left:967px;top:981px;width:182px;height:20px;background:#fdfdfd;border:1px solid #c6c6c6;border-left:none"></div>
<div class="t" style="left:829.800px;top:983px;font-size:13px;color:#111;transform:scaleX(0.962)">任意</div>
<div class="t" style="left:970px;top:983.500px;font-size:12px;color:#111;transform:scaleX(0.991)">Default</div>
<svg style="left:957px;top:989px" width="7" height="5" viewBox="0 0 7 5"><path d="M0.500 0.500h6l-3 3.500z" fill="#666"/></svg>
<svg style="left:1138px;top:989px" width="7" height="5" viewBox="0 0 7 5"><path d="M0.500 0.500h6l-3 3.500z" fill="#666"/></svg>
<svg style="left:1153px;top:984px" width="15" height="14" viewBox="0 0 15 14">
  <path d="M7.500 4v3M3.500 9.500v-2.500h8v2.500" fill="none" stroke="#4f78c0" stroke-width="1"/>
  <rect x="5" y="0.500" width="5" height="4" fill="#f01010" stroke="#4f78c0" stroke-width="0.800"/>
  <rect x="1" y="9" width="5" height="4.500" fill="#8fb4e4" stroke="#4f78c0" stroke-width="0.800"/>
  <rect x="9" y="9" width="5" height="4.500" fill="#f6e05a" stroke="#4f78c0" stroke-width="0.800"/>
</svg>
<svg style="left:1179px;top:987px" width="9" height="10" viewBox="0 0 9 10"><g fill="#b4b4b4"><rect x="6" y="0.500" width="2" height="2"/><rect x="3" y="3.500" width="2" height="2"/><rect x="6" y="3.500" width="2" height="2"/><rect x="0" y="6.500" width="2" height="2"/><rect x="3" y="6.500" width="2" height="2"/><rect x="6" y="6.500" width="2" height="2"/></g></svg>
<div id="edgeL" class="abs"></div>
<div id="edgeR" class="abs"></div>
<div id="edgeB" class="abs"></div>
</body>
</html>
